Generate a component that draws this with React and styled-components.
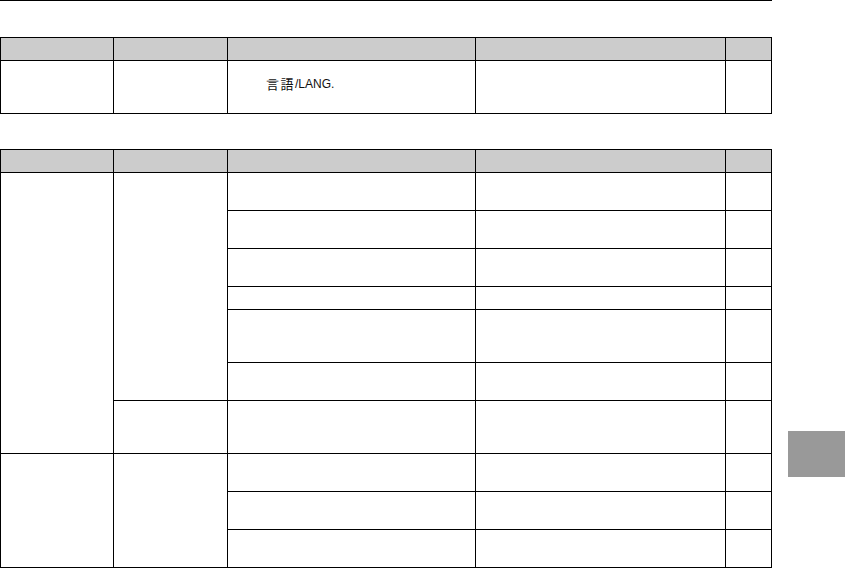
import styled, { createGlobalStyle } from "styled-components";

const GlobalStyle = createGlobalStyle`
    html, body {
        margin: 0;
        padding: 0;
        background: #fff;
        font-family: "Liberation Sans", "Noto Sans CJK JP", sans-serif;
    }
`;

const upperRows = [22, 52];
const lowerRows = [22, 37, 37, 37, 22, 52, 37, 52, 37, 37, 37];

function App() {
    return (
        <>
            <GlobalStyle />
            <Page>
                <Main>
                    <TopRule />
                    <Table $rows={upperRows} $top={36}>
                        <HeadCell />
                        <HeadCell />
                        <HeadCell />
                        <HeadCell />
                        <HeadCell />
                        <Cell />
                        <Cell />
                        <LabelCell>
                            <Cjk>言語</Cjk>/LANG.
                        </LabelCell>
                        <Cell />
                        <Cell />
                    </Table>

                    <Table $rows={lowerRows} $top={35}>
                        <HeadCell />
                        <HeadCell />
                        <HeadCell />
                        <HeadCell />
                        <HeadCell />

                        {/* first group */}
                        <Cell $col="1" $row="2 / span 7" />
                        <Cell $col="2" $row="2 / span 6" />
                        {[2, 3, 4, 5, 6, 7].map((r) => (
                            <RowCells key={r} row={r} />
                        ))}
                        <Cell $col="2" $row="8" />
                        <RowCells row={8} />

                        {/* second group */}
                        <Cell $col="1" $row="9 / span 3" />
                        <Cell $col="2" $row="9 / span 3" />
                        {[9, 10, 11].map((r) => (
                            <RowCells key={r} row={r} />
                        ))}
                    </Table>
                </Main>
                <Side>
                    <Tab />
                </Side>
            </Page>
        </>
    );
}

function RowCells({ row }) {
    return (
        <>
            <Cell $col="3" $row={row} />
            <Cell $col="4" $row={row} />
            <Cell $col="5" $row={row} />
        </>
    );
}

export default App;

const Page = styled.div`
    display: flex;
    align-items: flex-start;
    width: 845px;
    height: 568px;
    overflow: hidden;
`;

const Main = styled.div`
    display: flex;
    flex-direction: column;
    width: 772px;
`;

const TopRule = styled.div`
    height: 1px;
    background: #000;
`;

const Table = styled.div`
    display: grid;
    grid-template-columns: 112px 113px 247px 249px 45px;
    grid-template-rows: ${(p) => p.$rows.map((h) => `${h}px`).join(" ")};
    gap: 1px;
    padding: 1px;
    background: #000;
    margin-top: ${(p) => p.$top}px;
`;

const Cell = styled.div`
    background: #fff;
    grid-column: ${(p) => p.$col || "auto"};
    grid-row: ${(p) => p.$row || "auto"};
`;

const HeadCell = styled.div`
    background: #cccccc;
`;

const LabelCell = styled(Cell)`
    display: flex;
    align-items: center;
    padding: 0 0 7px 38px;
    font-size: 12px;
    color: #111;
`;

const Cjk = styled.span`
    font-family: "Noto Sans CJK JP", sans-serif;
    font-size: 13px;
    letter-spacing: 1.5px;
`;

const Side = styled.div`
    flex: 1;
    padding-left: 16px;
    padding-top: 431px;
`;

const Tab = styled.div`
    height: 46px;
    background: #999999;
`;
